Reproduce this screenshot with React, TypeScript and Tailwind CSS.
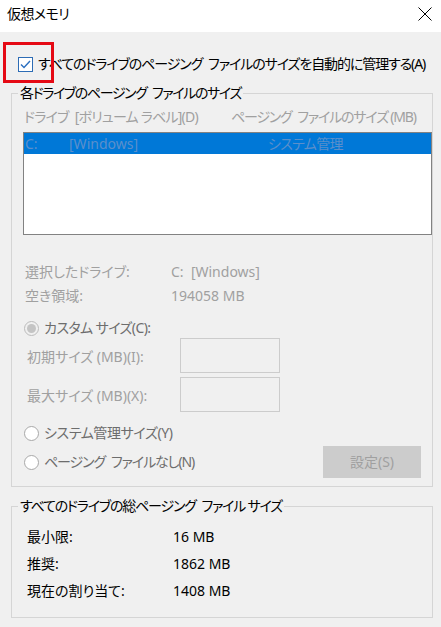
import React from "react";

const gray = "text-[#a0a0a0]";
const sp = "\u2002";

function Radio({ checked = false, disabled = false }: { checked?: boolean; disabled?: boolean }) {
  return (
    <span
      className={
        "flex h-[15px] w-[15px] shrink-0 items-center justify-center rounded-full border " +
        (disabled ? "border-[#bcbcbc] bg-[#f0f0f0]" : "border-[#a8a8a8] bg-white")
      }
    >
      {checked && <span className="h-[9px] w-[9px] rounded-full bg-[#c4c4c4]" />}
    </span>
  );
}

function SizeRow({ label, className }: { label: string; className: string }) {
  return (
    <div className={"flex items-center " + className}>
      <span className={"ml-[3px] w-[153px] pt-[3px] " + gray}>{label}</span>
      <div className="h-[35px] w-[100px] border border-[#cccccc] bg-[#f0f0f0]" />
    </div>
  );
}

const totals = [
  { label: "最小限:", value: "16 MB" },
  { label: "推奨:", value: "1862 MB" },
  { label: "現在の割り当て:", value: "1408 MB" },
];

export default function App() {
  return (
    <div className="flex h-[627px] w-[441px] flex-col overflow-hidden bg-[#f0f0f0] font-['Noto_Sans','Noto_Sans_CJK_JP',sans-serif] text-[14px] leading-5 text-black [font-feature-settings:'palt']">
      {/* title bar */}
      <div className="flex h-8 shrink-0 items-center justify-between bg-white pl-[7px] pr-[9px]">
        <span className="-mt-[4px] tracking-[-0.6px]">仮想メモリ</span>
        <svg width="14" height="14" viewBox="0 0 14 14" className="-mt-[4px]">
          <path d="M0.5 0.5 L13.5 13.5 M13.5 0.5 L0.5 13.5" stroke="#000" strokeWidth="1" />
        </svg>
      </div>

      <div className="relative flex flex-col pl-[11px]">
        {/* red annotation */}
        <div className="absolute left-[3px] top-[10px] h-[41px] w-[51px] border-[3px] border-[#e50914]" />

        <label className="mt-[22px] flex h-5 items-center">
          <span className="ml-[7px] flex h-[15px] w-[15px] items-center justify-center border border-[#2d6cb5] bg-white">
            <svg width="11" height="9" viewBox="0 0 11 9">
              <path d="M1 4.5 L4 7.5 L10 1" fill="none" stroke="#2a6fc0" strokeWidth="1.4" />
            </svg>
          </span>
          <span className="ml-[5px] whitespace-nowrap tracking-[-1.1px]">
            {`すべてのドライブのページング${sp}ファイルのサイズを自動的に管理する(A)`}
          </span>
        </label>

        <fieldset className="mt-[9px] w-[422px] border border-[#d5d5d5] pb-[8px]">
          <legend className="ml-[6px] px-[2px] tracking-[-1.4px]">{`各ドライブのページング${sp}ファイルのサイズ`}</legend>

          <div className={"mt-[4px] flex h-5 items-center pl-[12px] whitespace-nowrap " + gray}>
            <span className="w-[207px] tracking-[-0.8px]">{`ドライブ${sp}[ボリューム ラベル](D)`}</span>
            <span className="tracking-[-1.2px]">{`ページング${sp}ファイルのサイズ (MB)`}</span>
          </div>

          <div className="ml-[11px] mt-[5px] h-[103px] w-[409px] border border-[#828282] bg-white">
            <div className="flex h-[21px] items-center bg-[#0078d7] text-[#5b8fcb]">
              <span className="ml-[1px] w-[44px]">C:</span>
              <span className="w-[199px]">[Windows]</span>
              <span className="tracking-[-0.7px]">システム管理</span>
            </div>
          </div>

          <div className={"mt-[27px] flex h-5 items-center pl-[13px] " + gray}>
            <span className="w-[146px]">選択したドライブ:</span>
            <span>C:&nbsp;&nbsp;[Windows]</span>
          </div>
          <div className={"mt-[4px] flex h-5 items-center pl-[13px] " + gray}>
            <span className="w-[146px]">空き領域:</span>
            <span>194058 MB</span>
          </div>

          <div className="mt-[12px] flex h-5 items-center pl-[12px] text-[#6d6d6d]">
            <Radio checked disabled />
            <span className="ml-[5px] tracking-[-0.6px]">カスタム サイズ(C):</span>
          </div>

          <div className="pl-[12px]">
            <SizeRow label="初期サイズ (MB)(I):" className="mt-0" />
            <SizeRow label="最大サイズ (MB)(X):" className="mt-[4px]" />
          </div>

          <div className="mt-[11px] flex h-5 items-center pl-[12px] text-[#6d6d6d]">
            <Radio />
            <span className="ml-[5px] tracking-[-0.4px]">システム管理サイズ(Y)</span>
          </div>

          <div className="mt-[3px] flex h-8 items-center justify-between pl-[12px] pr-[11px]">
            <div className="flex items-center text-[#6d6d6d]">
              <Radio />
              <span className="ml-[5px] tracking-[-1.1px]">{`ページング${sp}ファイルなし(N)`}</span>
            </div>
            <div className={"flex h-8 w-[98px] items-center justify-center bg-[#cccccc] " + gray}>
              設定(S)
            </div>
          </div>
        </fieldset>

        <fieldset className="mt-[9px] w-[422px] border border-[#d5d5d5] pb-[16px]">
          <legend className="ml-[6px] px-[2px] tracking-[-1.2px]">{`すべてのドライブの総ページング${sp}ファイル サイズ`}</legend>
          <div className="mt-[11px] flex flex-col gap-[7px] pl-[15px]">
            {totals.map((t) => (
              <div key={t.label} className="flex h-5 items-center">
                <span className="w-[146px]">{t.label}</span>
                <span>{t.value}</span>
              </div>
            ))}
          </div>
        </fieldset>
      </div>
    </div>
  );
}
